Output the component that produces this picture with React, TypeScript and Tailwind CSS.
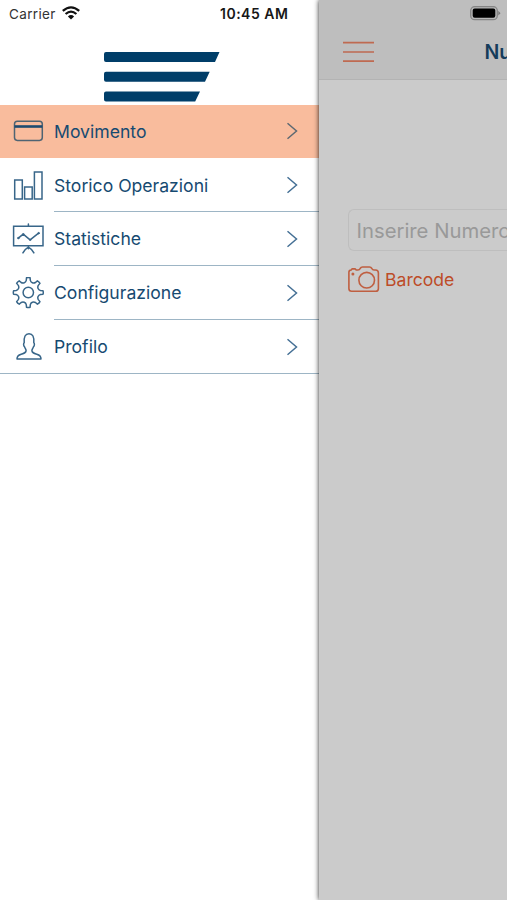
import type { ReactNode } from "react";

const polar = (r: number, deg: number) => {
  const a = ((deg - 90) * Math.PI) / 180;
  return `${(16.3 + r * Math.cos(a)).toFixed(2)} ${(15.5 + r * Math.sin(a)).toFixed(2)}`;
};

// Eight teeth with rounded valleys between them.
const gearPath =
  Array.from({ length: 8 }, (_, i) => {
    const c = i * 45;
    return `${i === 0 ? "M" : "L"}${polar(14.8, c - 7)} Q${polar(15.3, c)} ${polar(14.8, c + 7)} L${polar(12.3, c + 9.5)} C${polar(10.2, c + 15)} ${polar(10.2, c + 30)} ${polar(12.3, c + 35.5)}`;
  }).join(" ") + "Z";

function Icon({ children }: { children: ReactNode }) {
  return (
    <svg className="h-8 w-8 shrink-0" viewBox="0 0 32 32" fill="none" stroke="#386689" strokeWidth="1.5" strokeLinejoin="round" strokeLinecap="round">
      {children}
    </svg>
  );
}

const items = [
  {
    label: "Movimento",
    icon: (
      <Icon>
        <rect x="2.5" y="6.2" width="27.8" height="19.2" rx="2.8" stroke="#4f6473" />
        <path d="M2.5 11.5h27.8" stroke="#1d4a70" strokeWidth="2.6" strokeLinecap="butt" />
      </Icon>
    ),
  },
  {
    label: "Storico Operazioni",
    icon: (
      <Icon>
        <path d="M2.7 11h7.6v18.9H2.7zM12.6 18h7.6v11.9h-7.6zM22.4 3h7.6v26.9h-7.6z" strokeLinejoin="miter" />
      </Icon>
    ),
  },
  {
    label: "Statistiche",
    icon: (
      <Icon>
        <path d="M1.6 3.2h29.4v19.6H1.6zM16.4 1V3.2M16.4 22.8v3M10.9 29.9c1-2.4 2.8-4.1 5.5-5.7 2.7 1.6 4.5 3.3 5.5 5.7" strokeLinejoin="miter" />
        <path d="m6.3 15.1 4.9-3.9 6.900 5.600 8.500-6.600" />
        <g fill="#386689" strokeWidth=".8">
          <circle cx="6.3" cy="15.1" r=".8" />
          <circle cx="11.2" cy="11.2" r=".7" />
          <circle cx="18.1" cy="16.8" r=".7" />
          <circle cx="26.6" cy="10.2" r=".8" />
        </g>
      </Icon>
    ),
  },
  {
    label: "Configurazione",
    icon: (
      <Icon>
        <path d={gearPath} />
        <circle cx="16.3" cy="15.5" r="5.2" />
      </Icon>
    ),
  },
  {
    label: "Profilo",
    icon: (
      <Icon>
        <path d="M5 28h24c.1-3-1.300-4-4.200-4.800-3.200-.9-4.900-1.400-4.900-3.600 0-1.300.9-2 1.500-3.700.7-.5 1-1.300 1-2.400 0-.9-.2-1.500-.6-1.800.4-5.900-1-9-4.800-9s-5.200 3.100-4.800 9c-.4.3-.6.9-.6 1.800 0 1.100.3 1.900 1 2.400.6 1.700 1.500 2.400 1.500 3.700 0 2.200-1.700 2.700-4.900 3.600C6.300 24 4.900 25 5 28Z" />
      </Icon>
    ),
  },
];

function Logo() {
  return (
    <svg className="ml-[104px] h-[50px] w-[116px]" viewBox="0 0 116 50" fill="#003e69">
      <path d="M2 0H115.5L111 10H2Q0 10 0 8V2Q0 0 2 0ZM2 19.7H105.7L101 29.7H2Q0 29.7 0 27.7V21.7Q0 19.7 2 19.7ZM2 39.5H96L91.2 49.5H2Q0 49.5 0 47.5V41.5Q0 39.5 2 39.5Z" />
    </svg>
  );
}

function Menu() {
  return (
    <aside className="flex w-[319px] shrink-0 flex-col bg-white">
      <div className="flex h-[52px] items-start pl-[9px] pt-1">
        <span className="w-[48px] whitespace-nowrap text-[13.5px] leading-5 tracking-[0.35px] text-[#333]">Carrier</span>
        <svg className="ml-[5px] mt-[2px] h-[14px] w-[18px]" viewBox="0 0 18 14" fill="none" stroke="#111" strokeWidth="2.3">
          <path d="M.8 4.9Q9-2.1 17.2 4.9M3.6 8Q9 3.3 14.4 8" />
          <path d="M5.9 10.4Q9 7.8 12.1 10.4L9 13.5Z" fill="#111" stroke="none" />
        </svg>
        <span className="ml-[140px] whitespace-nowrap text-[14px] font-semibold leading-5 tracking-[0.5px] text-[#171717]">10:45 AM</span>
      </div>
      <Logo />
      <nav className="-mt-px pt-[3.5px]">
        {items.map((item, i) => (
          <div
            key={item.label}
            className={`flex h-[53.9px] items-center pl-3 ${i === 0 ? "bg-[#f9bc9d]" : ""} ${i === 4 ? "border-b border-[#9db5c5]" : ""}`}
          >
            {item.icon}
            <div className={`ml-[10px] flex h-full flex-1 items-center justify-between pr-[20px] ${i > 0 && i < 4 ? "border-b border-[#9db5c5]" : ""}`}>
              <span className="whitespace-nowrap pt-[1.8px] text-[17.6px] text-[#164a71]">{item.label}</span>
              <svg className="h-5 w-[14px]" viewBox="0 0 14 20" fill="none" stroke={i === 0 ? "#5d6972" : "#457095"} strokeWidth="1.5">
                <path d="m2.5 2.3 9 7.7-9 7.7" />
              </svg>
            </div>
          </div>
        ))}
      </nav>
    </aside>
  );
}

function Page() {
  return (
    <main className="relative w-[188px] shrink-0 bg-[#cbcbcb] shadow-[0_0_5px_rgba(0,0,0,0.85)]">
      <header className="h-20 border-b border-[#b3b3b3] bg-[#bebebe]">
        <div className="flex h-7 justify-end pr-[6px] pt-[6px]">
          <svg className="h-[15px] w-[31px]" viewBox="0 0 31 15">
            <rect x=".7" y=".7" width="26.6" height="13" rx="4" fill="#b7b7b7" stroke="#858585" strokeWidth="1.3" />
            <rect x="2.7" y="2.6" width="22.6" height="9.2" rx="2" fill="#000" />
            <path d="M28.3 4.8 30.5 7.2 28.3 9.6Z" fill="#777" />
          </svg>
        </div>
        <div className="flex h-12 items-center pl-6">
          <svg className="h-[22px] w-[31px]" viewBox="0 0 31 22" stroke="#bf6a51" strokeWidth="1.7">
            <path d="M0 1.700h31M0 11h31M0 20.2h31" />
          </svg>
          <h1 className="ml-[110.5px] w-[22.5px] overflow-hidden whitespace-nowrap pt-[2px] text-[19.5px] font-semibold text-[#153c5b]">Nu</h1>
        </div>
      </header>
      <div className="pl-[29px] pt-[129px]">
        <div className="flex h-[42px] items-center overflow-hidden rounded-l-[6px] border border-r-0 border-[#bebebe] pl-[7.5px]">
          <span className="whitespace-nowrap pt-[2px] text-[20.3px] text-[#999]">Inserire Numero</span>
        </div>
        <div className="mt-[12px] flex h-8 items-center">
          <svg className="h-[26px] w-8" viewBox="0 0 32 26" fill="none" stroke="#bf5f41" strokeWidth="1.6" strokeLinejoin="round">
            <path d="M.9 6.3Q.9 4 3.2 4L4 2.9H7.3L8.2 4H10Q11.5 4 12.2 2.5Q13 1 14.5 1H21.5Q23 1 23.8 2.5Q24.5 4 26 4H27.5Q30.4 4 30.4 7V22.4Q30.4 25.2 27.7 25.2H3.6Q.9 25.2.9 22.5Z" />
            <circle cx="18.7" cy="14.2" r="7.8" />
            <circle cx="4.9" cy="8" r=".7" />
          </svg>
          <span className="ml-[5px] whitespace-nowrap pt-[3px] text-[17.6px] text-[#bd4c28]">Barcode</span>
        </div>
      </div>
    </main>
  );
}

export default function App() {
  return (
    <div className="flex h-[900px] w-[507px] overflow-hidden bg-white font-[Inter,'Liberation_Sans',sans-serif]">
      <Menu />
      <Page />
    </div>
  );
}
